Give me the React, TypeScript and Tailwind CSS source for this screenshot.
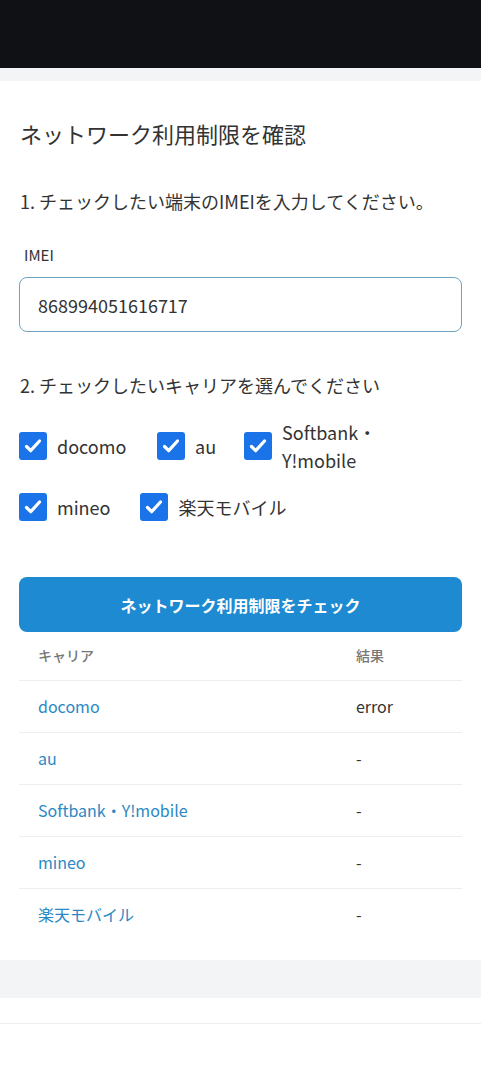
import { useState } from "react";

const carriers = [
  { name: "docomo", result: "error" },
  { name: "au", result: "-" },
  { name: "Softbank・Y!mobile", result: "-" },
  { name: "mineo", result: "-" },
  { name: "楽天モバイル", result: "-" },
];

function Check({ label, checked, onChange }: { label: React.ReactNode; checked: boolean; onChange: () => void }) {
  return (
    <label className="flex items-center gap-[10px] cursor-pointer">
      <span
        onClick={onChange}
        className={`w-[28px] h-[28px] rounded-[3px] flex items-center justify-center shrink-0 ${
          checked ? "bg-[#1a73e8]" : "border-2 border-gray-500 bg-white"
        }`}
      >
        {checked && (
          <svg width="20" height="20" viewBox="0 0 20 20" fill="none">
            <path d="M3.5 10.5l4.2 4.2L16.5 5" stroke="white" strokeWidth="3.2" strokeLinecap="round" strokeLinejoin="round" />
          </svg>
        )}
      </span>
      <span className="text-[18px] leading-[28px] text-[#333]">{label}</span>
    </label>
  );
}

export default function App() {
  const [imei, setImei] = useState("868994051616717");
  const [checked, setChecked] = useState<Record<string, boolean>>({
    docomo: true,
    au: true,
    softbank: true,
    mineo: true,
    rakuten: true,
  });
  const toggle = (k: string) => setChecked({ ...checked, [k]: !checked[k] });

  return (
    <div className="min-h-[1080px] bg-white font-['Noto_Sans_CJK_JP','Noto_Sans',sans-serif]">
      {/* Top bar */}
      <div className="h-[68px] bg-[#0f1115]" />
      <div className="h-[13px] bg-[#f3f4f6]" />

      {/* Card */}
      <div className="px-[19px] pt-[36px] pb-[20px]">
        <h1 className="text-[22px] leading-[32px] text-[#333] pl-[1px]">ネットワーク利用制限を確認</h1>

        <p className="mt-[39px] text-[18px] leading-[26px] text-[#333] pl-[1px]">
          1. チェックしたい端末のIMEIを入力してください。
        </p>

        <div className="mt-[31px] pl-[5px] text-[15px] leading-[20px] text-[#333]">IMEI</div>
        <input
          value={imei}
          onChange={(e) => setImei(e.target.value)}
          className="mt-[12px] w-full h-[55px] rounded-[8px] border border-[#6fa3c0] px-[18px] text-[18px] text-[#333] outline-none"
        />

        <p className="mt-[40px] text-[18px] leading-[26px] text-[#333] pl-[1px]">
          2. チェックしたいキャリアを選んでください
        </p>

        <div className="mt-[20px] flex flex-wrap gap-x-[10px]">
          <div className="w-[128px] flex items-center">
            <Check label="docomo" checked={checked.docomo} onChange={() => toggle("docomo")} />
          </div>
          <div className="w-[77px] flex items-center">
            <Check label="au" checked={checked.au} onChange={() => toggle("au")} />
          </div>
          <div className="flex items-center">
            <Check
              label={
                <span className="block">
                  Softbank・
                  <br />
                  Y!mobile
                </span>
              }
              checked={checked.softbank}
              onChange={() => toggle("softbank")}
            />
          </div>
        </div>
        <div className="mt-[19px] flex gap-x-[30px]">
          <Check label="mineo" checked={checked.mineo} onChange={() => toggle("mineo")} />
          <Check label="楽天モバイル" checked={checked.rakuten} onChange={() => toggle("rakuten")} />
        </div>

        <button className="mt-[56px] w-full h-[55px] rounded-[8px] bg-[#1d8ad2] text-white font-bold text-[16px]">
          ネットワーク利用制限をチェック
        </button>

        {/* Results table */}
        <table className="w-full text-left">
          <thead>
            <tr className="border-b border-[#eeeeee]">
              <th className="pl-[19px] h-[48px] text-[14px] font-medium text-[#777]">キャリア</th>
              <th className="w-[106px] h-[48px] text-[14px] font-medium text-[#777]">結果</th>
            </tr>
          </thead>
          <tbody>
            {carriers.map((c, i) => (
              <tr key={c.name} className={i < carriers.length - 1 ? "border-b border-[#eeeeee]" : ""}>
                <td className="pl-[19px] h-[52px] text-[16px] text-[#2a88c4]">{c.name}</td>
                <td className="h-[52px] text-[16px] text-[#333]">{c.result}</td>
              </tr>
            ))}
          </tbody>
        </table>
      </div>

      <div className="h-[38px] bg-[#f3f4f6]" />
      <div className="h-[26px] border-b border-[#eeeeee]" />
    </div>
  );
}
